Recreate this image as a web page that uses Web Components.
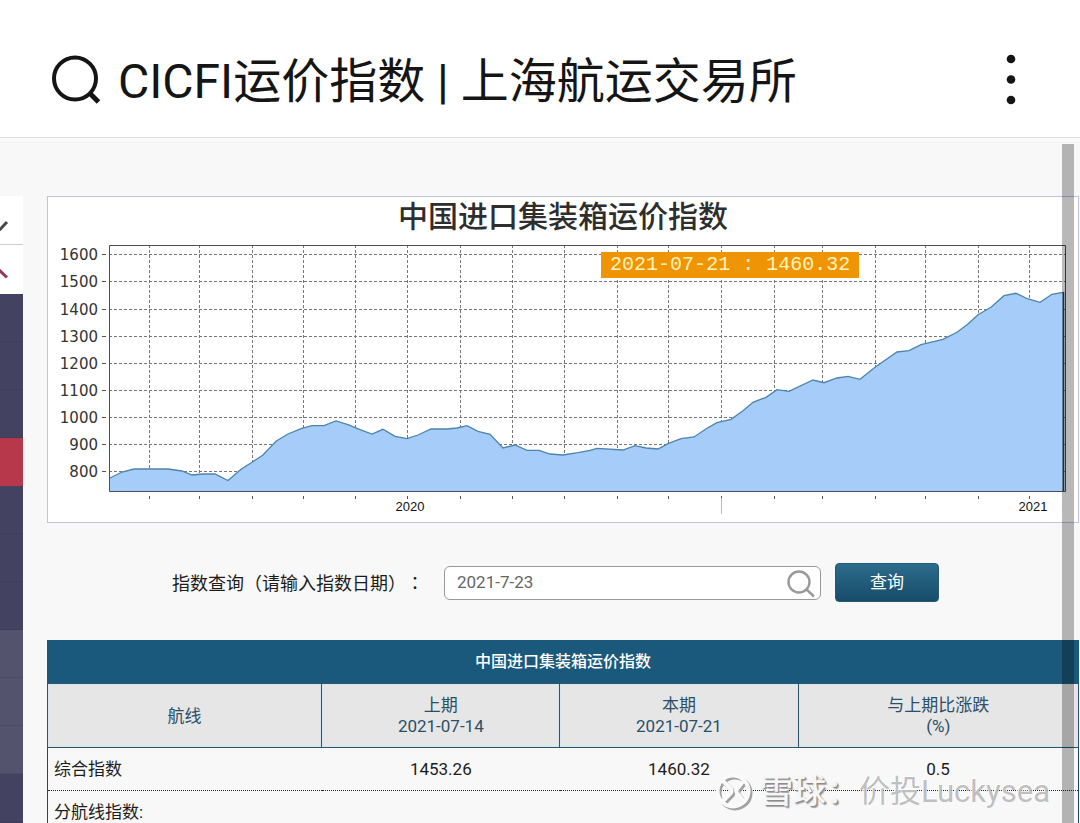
<!DOCTYPE html>
<html lang="zh-CN">
<head>
<meta charset="utf-8">
<meta name="viewport" content="width=device-width, initial-scale=1">
<title>CICFI运价指数 | 上海航运交易所</title>
<style>
  body { margin: 0; background: #f8f8f8; color: #1c1c1c; font: 17px/21px Roboto, "Noto Sans CJK SC", sans-serif; }
</style>
</head>
<body>
<index-page>
  <title-bar slot="top">CICFI运价指数 | 上海航运交易所</title-bar>
  <side-menu slot="side"></side-menu>
  <index-chart heading="中国进口集装箱运价指数" tip="2021-07-21 : 1460.32"></index-chart>
  <query-form value="2021-7-23">指数查询（请输入指数日期）<span lang="zh-TW">：</span></query-form>
  <index-table heading="中国进口集装箱运价指数"></index-table>
  <water-mark slot="over" name="雪球：">价投Luckysea</water-mark>
</index-page>

<script>
// small base: clone a template into an open shadow root
class BaseElement extends HTMLElement {
  constructor() {
    super();
    this._shadow = this.attachShadow({ mode: 'open' });
    const tpl = document.createElement('template');
    tpl.innerHTML = this.template();
    this._shadow.appendChild(tpl.content.cloneNode(true));
  }
}

class IndexPage extends BaseElement {
  template() {
    return `
      <style>
        :host{ display:flex; flex-direction:column; height:100vh; overflow:hidden; position:relative; }
        .body{ flex:1; min-height:0; display:flex; gap:24px; padding:58px 1px 0 0; position:relative; }
        main{ flex:1; min-width:0; display:flex; flex-direction:column; gap:38px; }
        .thumb{ position:absolute; top:6px; right:6px; bottom:0; width:12px; background:rgba(0,0,0,.28); }
      </style>
      <slot name="top"></slot>
      <div class="body">
        <slot name="side"></slot>
        <main><slot></slot></main>
        <div class="thumb"></div>
      </div>
      <slot name="over"></slot>
    `;
  }
}

class TitleBar extends BaseElement {
  template() {
    return `
      <style>
        :host{ display:block; background:#fff; border-bottom:1px solid #ddd; box-shadow:0 4px 0 #fbfbfb, 0 5px 0 #f0f0f0; }
        header{ display:flex; align-items:center; padding:45px 56px 18px 48px; color:#151515; }
        h1{ flex:1; margin:0 0 0 14px; font-size:48px; line-height:74px; font-weight:400; white-space:nowrap; overflow:hidden; }
        button{ border:0; padding:0; background:none; color:inherit; display:flex; }
      </style>
      <header>
        <button type="button" aria-label="搜索">
          <svg width="56" height="56" viewBox="0 0 56 56" fill="none" stroke="currentColor" stroke-width="4">
            <circle cx="27" cy="24.5" r="21"/><path d="M42 39.500l8.500 8.500" stroke-width="5"/>
          </svg>
        </button>
        <h1><slot></slot></h1>
        <button type="button" aria-label="菜单">
          <svg width="26" height="56" viewBox="0 0 26 56" fill="currentColor">
            <circle cx="13" cy="5" r="4.3"/><circle cx="13" cy="25.5" r="4.3"/><circle cx="13" cy="46" r="4.3"/>
          </svg>
        </button>
      </header>
    `;
  }
}

class SideMenu extends BaseElement {
  template() {
    return `
      <style>
        :host{ display:block; width:23px; flex:none; }
        nav{ display:flex; flex-direction:column; }
        button, a{ display:block; box-sizing:border-box; height:48px; flex:none; padding:0; border:0; border-bottom:1px solid #3e3d5b; background:#434260; }
        button{ height:49px; padding-top:9px; background:#fff; border-bottom-color:#ccc; text-align:left; }
        button + button{ border-bottom-color:#fff; }
        .on{ background:#b8384b; border-color:#b8384b; }
        .sub{ background:#54536d; border-color:#4b4a68; }
        svg{ display:block; }
      </style>
      <nav>
        <button type="button" aria-label="展开"><svg width="12" height="12" viewBox="0 0 12 12" fill="none" stroke="#484848" stroke-width="3"><path d="M-2 12.500L7 3"/></svg></button>
        <button type="button" aria-label="收起"><svg width="12" height="12" viewBox="0 0 12 12" fill="none" stroke="#933c55" stroke-width="3"><path d="M-2 1L7 9.500"/></svg></button>
      </nav>
    `;
  }

  connectedCallback() {
    const nav = this._shadow.querySelector('nav');
    ['', '', '', 'on', '', '', '', 'sub', 'sub', 'sub', '', ''].forEach(cls => {
      const a = document.createElement('a');
      a.href = '#';
      a.className = cls;
      nav.appendChild(a);
    });
  }
}

const CHART_POINTS = [
  [110,478],[122,472],[134,469],[168,469],[182,471],[192,475],[203,474],[215,474],[228,480.500],[241,469.300],
  [252,462.300],[263,455],[276,441.300],[288,434],[301,428.700],[312,425.700],[324,425.700],[336,421],[348,424.700],
  [360,429.700],[372,434],[383,429.300],[395,436.300],[407,438.700],[418,435],[431,429],[447,429],[457,428],
  [467,425.700],[478,431.300],[490,434.300],[503,448],[515,445],[527,450.300],[539,450.300],[550,454],[563,455],
  [578,452.700],[590,450.300],[597,448.300],[623,450],[635,445.700],[646,448],[658,449],[668,443.700],[681,438.700],
  [694,437],[707,428.300],[717,422.700],[731,419.300],[743,410.700],[753,402.300],[766,397.300],[777,389.700],
  [789,391.300],[813,380],[824,382.700],[837,378],[848,376.300],[860,379.300],[875,367.300],[897,352],[909,350.700],
  [921,344.700],[943,339.300],[957,332.300],[968,324],[978,314.700],[991,307.300],[1004,295.700],[1016,293.300],
  [1028,299],[1040,302.300],[1052,294.300],[1063,292.300]
];
const GRID_X = [149,199,252,303,355,407,460,512,564,617,668,721,774,822,875,925,978,1029];
const GRID_Y = [[1600,254],[1500,281],[1400,309],[1300,336],[1200,363],[1100,390],[1000,417],[900,444],[800,471]];

class IndexChart extends BaseElement {
  template() {
    return `
      <style>
        :host{ display:block; position:relative; background:#fff; border:1px solid #b9c5dc; }
        h2{ margin:0; text-align:center; font-size:30px; line-height:40px; font-weight:500; color:#2e2e2e; }
        svg{ display:block; width:100%; height:auto; }
        .tick{ font-family:"DejaVu Sans", sans-serif; font-size:15px; fill:#333; text-anchor:end; }
        .year{ font-family:"Liberation Sans", sans-serif; font-size:13px; fill:#111; text-anchor:middle; }
        .tip{ position:absolute; left:53.700%; top:55px; padding:0 9px; background:#ef9505; color:#fff3b8;
              font-family:"Liberation Mono", monospace; font-size:20px; line-height:26px; white-space:pre; }
      </style>
      <h2></h2>
      <svg viewBox="48 237 1030 285"></svg>
      <div class="tip"></div>
    `;
  }

  connectedCallback() {
    this._shadow.querySelector('h2').textContent = this.getAttribute('heading');
    this._shadow.querySelector('.tip').textContent = this.getAttribute('tip');

    const grid = GRID_X.map(x => `M${x}.5 245V491`).join('') + GRID_Y.map(g => `M109 ${g[1]}.5H1065`).join('');
    const ticks = GRID_X.map(x => `M${x}.5 496v3`).join('') + GRID_Y.map(g => `M102 ${g[1]}.5h4`).join('');
    const line = CHART_POINTS.map(p => p.join(' ')).join('L');
    this._shadow.querySelector('svg').innerHTML = `
      <path d="${grid}" stroke="#777" stroke-dasharray="3 2" fill="none"/>
      <path d="${ticks}" stroke="#555" fill="none"/>
      <path d="M721.5 498v16" stroke="#bbb"/>
      <path d="M${line}V491H110Z" fill="#a6cdf9"/>
      <path d="M${line}" fill="none" stroke="#4d84ab" stroke-width="1.3"/>
      <path d="M109.5 245.5H1065.5V491.500H109.500Z" fill="none" stroke="#4a4f58"/>
      <path d="M1063.5 292V491" stroke="#20466b" stroke-width="1.5"/>
      ${GRID_Y.map(g => `<text class="tick" x="98" y="${g[1] + 6}">${g[0]}</text>`).join('')}
      <text class="year" x="410" y="511">2020</text>
      <text class="year" x="1033" y="511">2021</text>
    `;
  }
}

class QueryForm extends BaseElement {
  template() {
    return `
      <style>
        :host{ display:block; }
        form{ display:flex; align-items:center; justify-content:center; margin:0; padding:2px 15px 0 0; }
        label{ font-size:18px; line-height:27px; margin-right:20px; white-space:nowrap; text-spacing-trim:space-all; }
        /* colon centred in its cell */
        ::slotted(span){ font-family:"Noto Sans CJK TC", sans-serif; }
        .field{ flex:0 1 377px; min-width:0; box-sizing:border-box; height:34px; display:flex; align-items:center;
                border:1px solid #999; border-radius:6px; background:#fff; padding:0 4px 0 12px; }
        input{ flex:1; min-width:0; border:0; outline:0; padding:0; background:none; color:#666; font:inherit; }
        .find{ border:0; padding:0; background:none; display:flex; }
        .go{ width:104px; height:39px; margin-left:14px; padding:0; border:1px solid #245a76; border-radius:4px; color:#fff;
             font:inherit; background:linear-gradient(#2c6c8c, #174c69); }
      </style>
      <form>
        <label for="date"><slot></slot></label>
        <div class="field">
          <input id="date" type="text">
          <button class="find" type="button" aria-label="查找">
            <svg width="30" height="30" viewBox="0 0 30 30" fill="none" stroke="#999" stroke-width="2.400"><circle cx="13" cy="14" r="10.500"/><path d="M20.500 21.500L28 28.500"/></svg>
          </button>
        </div>
        <button class="go" type="submit">查询</button>
      </form>
    `;
  }

  connectedCallback() {
    this._shadow.querySelector('input').value = this.getAttribute('value') || '';
    this._shadow.querySelector('form').addEventListener('submit', e => e.preventDefault());
  }
}

class IndexTable extends BaseElement {
  template() {
    return `
      <style>
        :host{ display:block; }
        table{ width:100%; border-collapse:collapse; table-layout:fixed; border:1px solid #1b4a63; }
        col:nth-child(1){ width:26.600%; }
        col:nth-child(2), col:nth-child(3){ width:23.100%; }
        caption{ height:43px; background:#1a597c; color:#fff; font-size:16px; line-height:43px; font-weight:500; }
        th{ height:64px; box-sizing:border-box; padding:1px 0 0; background:#e6e6e7; border:1px solid #2b566b; box-shadow:inset 0 0 0 1px #d7e5ec;
            color:#2a5068; font-weight:400; }
        td{ height:43px; box-sizing:border-box; padding:1px 6px 0; text-align:center; border-bottom:1px dotted #222; }
        td:first-child{ text-align:left; }
      </style>
      <table>
        <caption></caption>
        <colgroup><col><col><col><col></colgroup>
        <thead>
          <tr><th>航线</th><th>上期<br>2021-07-14</th><th>本期<br>2021-07-21</th><th>与上期比涨跌<br>(%)</th></tr>
        </thead>
        <tbody>
          <tr><td>综合指数</td><td>1453.26</td><td>1460.32</td><td>0.5</td></tr>
          <tr><td>分航线指数:</td><td></td><td></td><td></td></tr>
        </tbody>
      </table>
    `;
  }

  connectedCallback() {
    this._shadow.querySelector('caption').textContent = this.getAttribute('heading');
  }
}

class WaterMark extends BaseElement {
  template() {
    return `
      <style>
        :host{ position:absolute; right:30px; bottom:11px; display:flex; align-items:center; pointer-events:none;
               font-size:31px; line-height:30px; color:rgba(175,175,175,.8); white-space:nowrap; text-shadow:-1px -1px 0 rgba(255,255,255,.9); }
        svg{ margin-right:7px; }
        b{ font-size:33px; font-weight:500; color:#f6f6f6; text-shadow:1px 1px 1px #888, 2px 2px 1px #aaa; }
      </style>
      <svg width="40" height="40" viewBox="0 0 40 40" fill="none">
        <g transform="translate(2 2)" stroke="#a2a2a2" stroke-width="4"><circle cx="20" cy="19" r="15.500"/><path d="M9 8L17.500 16.500Q19.500 19 17.500 21.500L9 30M30 9.500L24 17Q22.500 19 24 21L32 31"/></g>
        <g stroke="#fafafa" stroke-width="4"><circle cx="20" cy="19" r="15.500"/><path d="M9 8L17.500 16.500Q19.500 19 17.500 21.500L9 30M30 9.500L24 17Q22.500 19 24 21L32 31"/></g>
      </svg>
      <b></b><slot></slot>
    `;
  }

  connectedCallback() {
    this._shadow.querySelector('b').textContent = this.getAttribute('name');
  }
}

customElements.define('index-page', IndexPage);
customElements.define('title-bar', TitleBar);
customElements.define('side-menu', SideMenu);
customElements.define('index-chart', IndexChart);
customElements.define('query-form', QueryForm);
customElements.define('index-table', IndexTable);
customElements.define('water-mark', WaterMark);
</script>
</body>
</html>
